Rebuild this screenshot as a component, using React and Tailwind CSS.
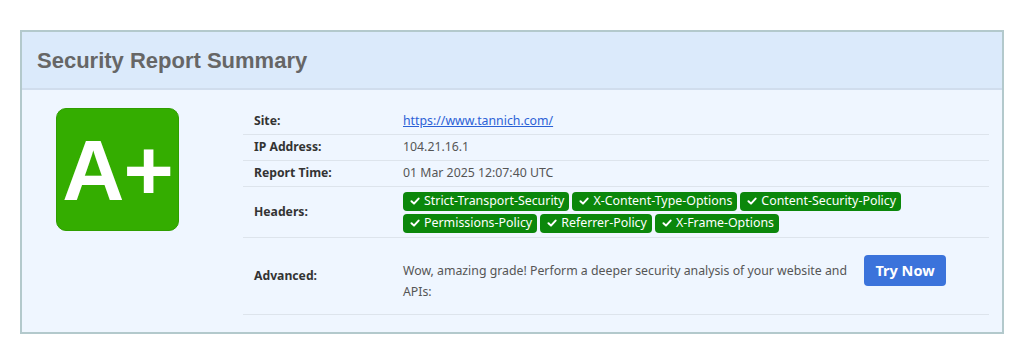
import React from 'react';

const headers = [
  'Strict-Transport-Security',
  'X-Content-Type-Options',
  'Content-Security-Policy',
  'Permissions-Policy',
  'Referrer-Policy',
  'X-Frame-Options',
];

const Check = () => (
  <svg width="10" height="10" viewBox="0 0 10 10" className="shrink-0">
    <path d="M1.5 5.2 L4 7.6 L8.6 2.6" fill="none" stroke="white" strokeWidth="2" strokeLinecap="round" strokeLinejoin="round" />
  </svg>
);

const Badge = ({ children }) => (
  <span className="inline-flex items-center gap-[4px] h-[19px] pl-[7px] pr-[5px] rounded-[4px] bg-[#0b870b] text-white text-[12.4px] leading-none">
    <Check />
    {children}
  </span>
);

const Row = ({ label, children, className = '', valueClassName = '' }) => (
  <div className={`flex items-center border-b border-[#dde4ec] ${className}`}>
    <div className="w-[160px] pl-[11px] font-bold text-[#333] text-[12.2px]">{label}</div>
    <div className={`flex-1 text-[#555] ${valueClassName}`}>{children}</div>
  </div>
);

export default function App() {
  return (
    <div className="h-[347px] bg-white pt-[30px] px-[20px] font-['Noto_Sans',sans-serif]">
      <div className="border-2 border-[#b3c9cc] bg-[#eff6ff]">
        <div className="h-[58px] bg-[#dbeafb] border-b-2 border-[#d0dded] flex items-center pl-[15px]">
          <h1 className="font-['Liberation_Sans',sans-serif] font-bold text-[22px] text-[#666]">Security Report Summary</h1>
        </div>
        <div className="flex pt-[19px] pb-[17px]">
          <div className="w-[221px] pl-[34px]">
            <div className="-mt-[1px] w-[123px] h-[123px] rounded-[10px] bg-[#34ad00] border border-[#2f9e00] flex items-center justify-center">
              <span className="font-['Liberation_Sans',sans-serif] font-bold text-[86px] leading-none text-white tracking-[-1px]">A+</span>
            </div>
          </div>
          <div className="flex-1 mr-[13px] text-[12.3px]">
            <Row label="Site:" className="h-[26px]">
              <a href="#" className="text-[#2b61d6] underline">https://www.tannich.com/</a>
            </Row>
            <Row label="IP Address:" className="h-[26px]">104.21.16.1</Row>
            <Row label="Report Time:" className="h-[26px]">01 Mar 2025 12:07:40 UTC</Row>
            <Row label="Headers:" className="h-[51px]">
              <div className="flex flex-wrap gap-x-[3px] gap-y-[3px]">
                {headers.map((h) => (
                  <Badge key={h}>{h}</Badge>
                ))}
              </div>
            </Row>
            <Row label="Advanced:" className="h-[77px]" valueClassName="self-stretch pt-[17px]">
              <div className="flex items-start gap-[14px]">
                <p className="w-[447px] leading-[21px] mt-[5px]">
                  Wow, amazing grade! Perform a deeper security analysis of your website and APIs:
                </p>
                <button className="w-[82px] h-[31px] rounded-[4px] bg-[#3b73db] text-white font-bold text-[14.5px]">Try Now</button>
              </div>
            </Row>
          </div>
        </div>
      </div>
    </div>
  );
}
